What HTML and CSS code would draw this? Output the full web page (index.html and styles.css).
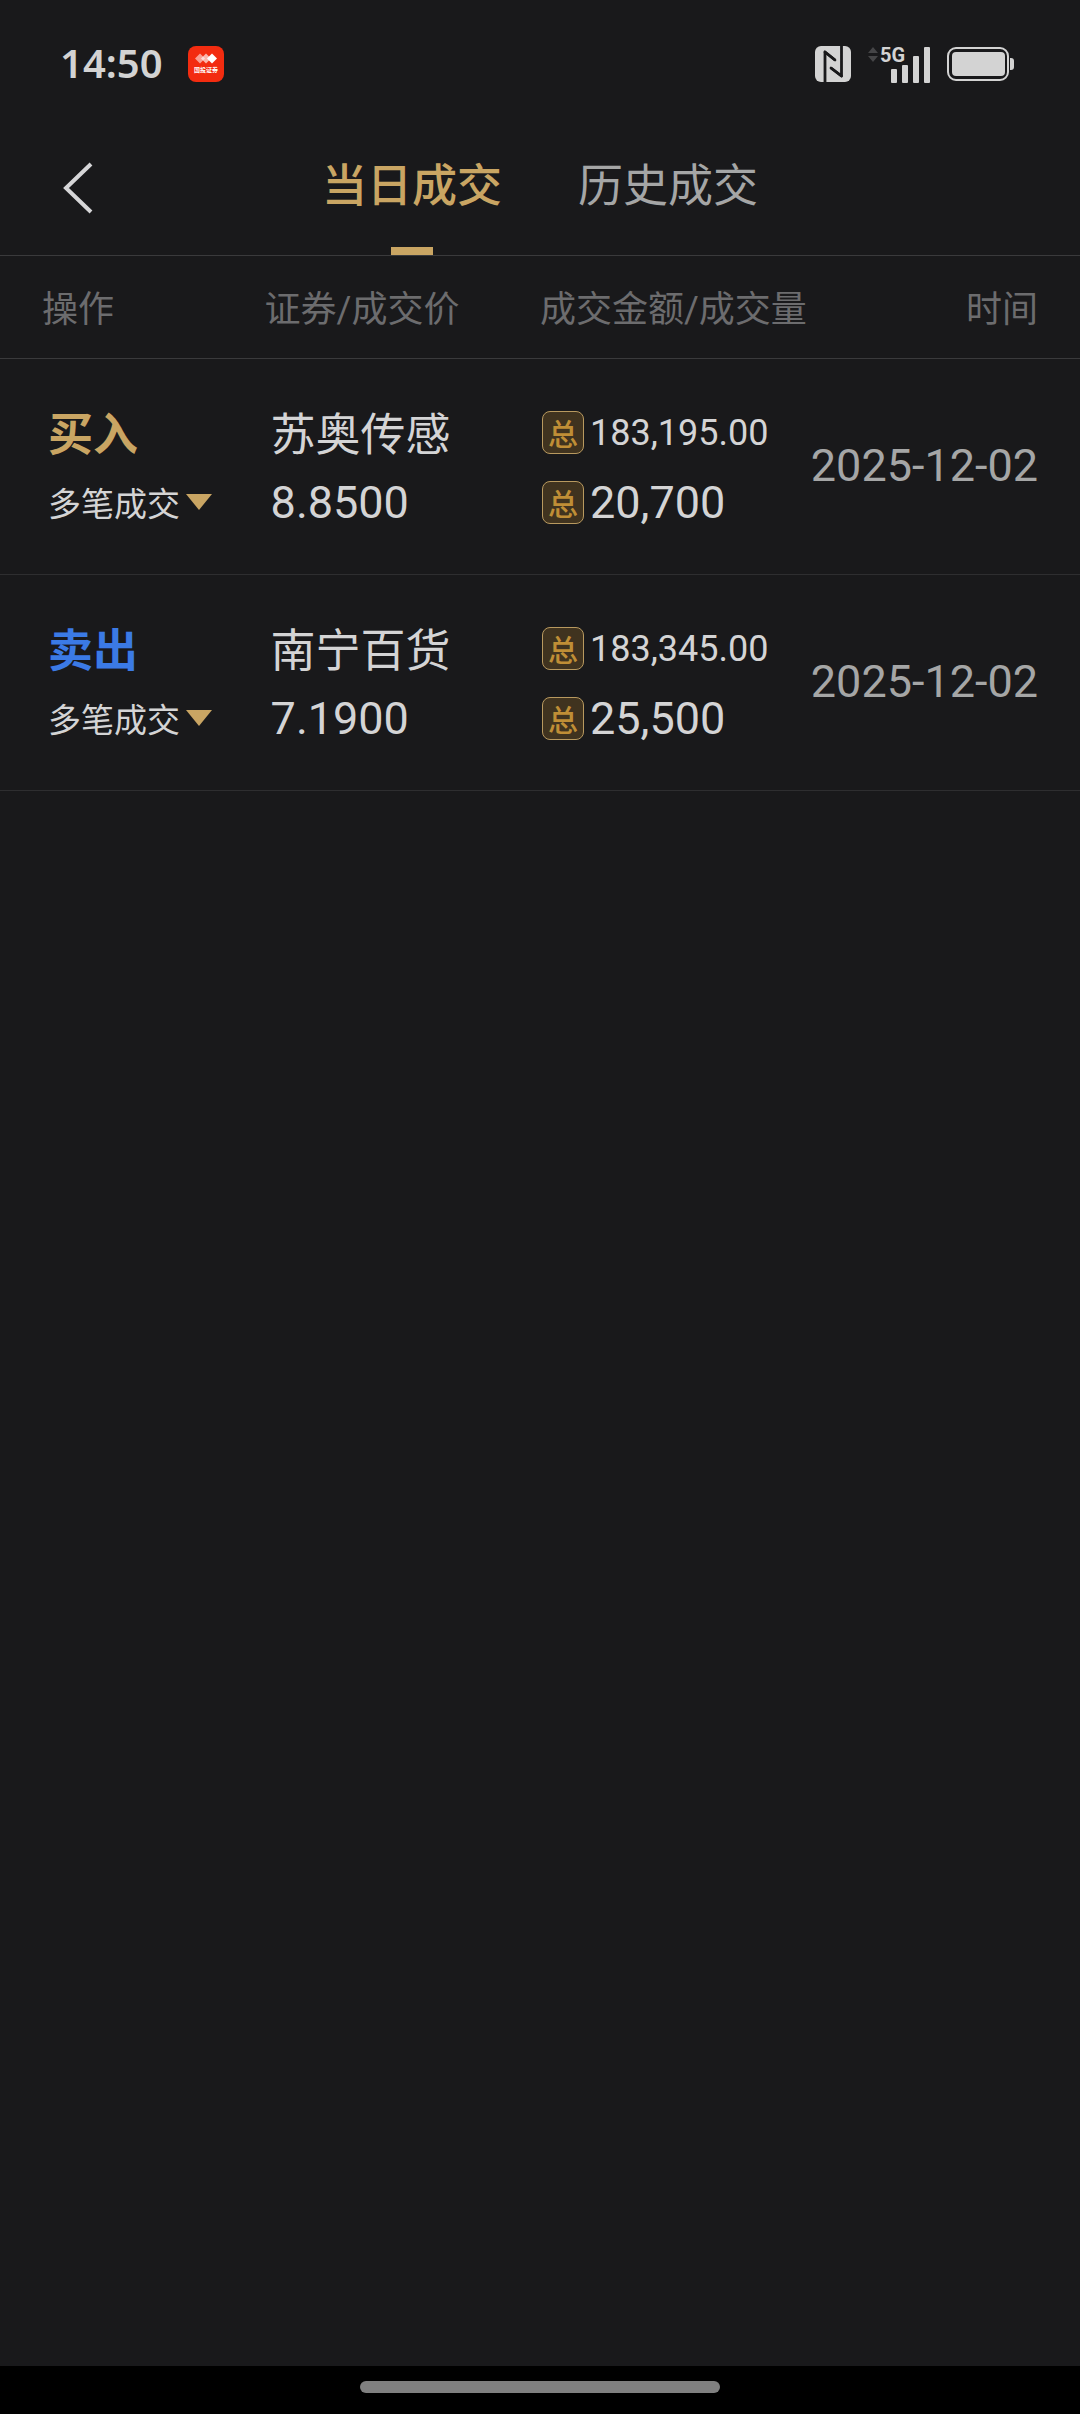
FILE: index.html
```html
<!DOCTYPE html>
<html lang="zh-CN">
<head>
<meta charset="utf-8">
<meta name="viewport" content="width=device-width, initial-scale=1">
<title>当日成交</title>
<link rel="stylesheet" href="styles.css">
</head>
<body>
<div class="status">
  <span class="clock">14:50</span>
  <svg class="app-icon" viewBox="0 0 36 36" role="img" aria-label="国投证券">
    <rect width="36" height="36" rx="8" fill="#f32c10"/>
    <path d="M12 7.500l5 5-5 5-5-5z" fill="#fff" opacity=".55"/>
    <path d="M18 7.500l5 5-5 5-5-5z" fill="#fff" opacity=".65"/>
    <path d="M24 7.500l5 5-5 5-5-5z" fill="#fff"/>
    <text x="18" y="26" text-anchor="middle" class="app-name">国投证券</text>
  </svg>
  <div class="indicators">
    <svg class="nfc" viewBox="0 0 36 36" role="img" aria-label="NFC">
      <rect width="36" height="36" rx="6" fill="#d3d3d3"/>
      <path d="M10 36V6l10 8M26.500 0v30l-10.500-8" fill="none" stroke="#19191b" stroke-width="2.800" stroke-linejoin="round"/>
      <path d="M10 6l10 8M26.500 30l-10.500-8" fill="none" stroke="#19191b" stroke-width="2.800" stroke-linecap="round"/>
    </svg>
    <svg class="signal" viewBox="0 0 62 38" role="img" aria-label="5G">
      <path d="M0 8l5-6 5 6zM0 11h10l-5 6z" fill="#454547"/>
      <text x="12" y="17" class="network">5G</text>
      <g fill="#d3d3d3"><rect x="23" y="24" width="6" height="14" rx="1"/><rect x="34" y="20" width="6" height="18" rx="1"/><rect x="45" y="11" width="6" height="27" rx="1"/><rect x="56" y="2" width="6" height="36" rx="1"/></g>
    </svg>
    <svg class="battery" viewBox="0 0 67 34" role="img" aria-label="电池">
      <rect x="1" y="1" width="60" height="32" rx="8" fill="none" stroke="#d3d3d3" stroke-width="2"/>
      <rect x="5" y="5" width="53" height="24" rx="4" fill="#d3d3d3"/>
      <path d="M63 11h1a3 3 0 0 1 3 3v6a3 3 0 0 1-3 3h-1z" fill="#d3d3d3"/>
    </svg>
  </div>
</div>
<header class="nav">
  <button class="back" type="button" aria-label="返回">
    <svg viewBox="0 0 32 52"><path d="M29 2L4 26l25 24" fill="none" stroke="#d6d6d8" stroke-width="4"/></svg>
  </button>
  <nav class="tabs">
    <a class="tab active" href="#today">当日成交</a>
    <a class="tab" href="#history">历史成交</a>
  </nav>
</header>
<main class="content">
  <table class="deals">
    <thead>
      <tr><th class="col-op">操作</th><th class="col-name">证券/成交价</th><th>成交金额/成交量</th><th class="col-time">时间</th></tr>
    </thead>
    <tbody>
      <tr>
        <td><div class="line cjk side buy">买入</div><button class="line cjk more" type="button">多笔成交<svg class="caret" viewBox="0 0 26 16"><path d="M0 0h26L13 16z" fill="#c9a563"/></svg></button></td>
        <td><div class="line cjk">苏奥传感</div><div class="line">8.8500</div></td>
        <td><div class="line total amount"><span class="badge">总</span>183,195.00</div><div class="line total"><span class="badge">总</span>20,700</div></td>
        <td class="time">2025-12-02</td>
      </tr>
      <tr>
        <td><div class="line cjk side sell">卖出</div><button class="line cjk more" type="button">多笔成交<svg class="caret" viewBox="0 0 26 16"><path d="M0 0h26L13 16z" fill="#c9a563"/></svg></button></td>
        <td><div class="line cjk">南宁百货</div><div class="line">7.1900</div></td>
        <td><div class="line total amount"><span class="badge">总</span>183,345.00</div><div class="line total"><span class="badge">总</span>25,500</div></td>
        <td class="time">2025-12-02</td>
      </tr>
    </tbody>
  </table>
</main>
<footer class="home"><div class="handle"></div></footer>
</body>
</html>
```
FILE: styles.css
```css
* { box-sizing: border-box; }
body {
  margin: 0;
  min-height: 100vh;
  display: flex;
  flex-direction: column;
  background: #19191b;
  color: #d4d4d5;
  font-family: Roboto, "Noto Sans CJK SC", sans-serif;
}
button {
  padding: 0;
  border: 0;
  background: none;
  color: inherit;
  font: inherit;
}
svg { display: block; flex: none; overflow: visible; }

.status {
  display: flex;
  align-items: center;
  height: 128px;
  padding: 0 66px 0 60px;
}
.clock {
  width: 128px;
  padding-bottom: 2px;
  font: 600 40px/56px "Noto Sans", sans-serif;
  color: #d3d3d3;
}
.app-icon { width: 36px; height: 36px; }
.app-name { font: 700 6px "Noto Sans CJK SC", sans-serif; fill: #fff; }
.indicators { display: flex; align-items: center; margin-left: auto; }
.nfc { width: 36px; height: 36px; }
.signal { width: 62px; height: 38px; margin: 0 17px; }
.network { font: 700 20px Roboto, sans-serif; fill: #d3d3d3; }
.battery { width: 67px; height: 34px; }

.nav {
  display: grid;
  grid-template-columns: 1fr auto 1fr;
  height: 128px;
  border-bottom: 1px solid #3a3a3c;
}
.back { justify-self: start; padding: 0 62px 8px; }
.back svg { width: 32px; height: 52px; }
.tabs { display: flex; gap: 76px; }
.tab {
  display: flex;
  flex-direction: column;
  align-items: center;
  justify-content: space-between;
  color: #a5a6a6;
  font-size: 45px;
  line-height: 118px;
  text-decoration: none;
}
.active { color: #c9a563; font-weight: 500; }
.active::after { content: ""; width: 42px; height: 8px; background: #c9a563; }

.content { flex: 1; }
.deals { width: 100%; table-layout: fixed; border-collapse: collapse; }
th {
  height: 102px;
  padding: 0 0 2px;
  border-bottom: 1px solid #3a3a3c;
  color: #6c6c6e;
  font-size: 36px;
  font-weight: 400;
  text-align: left;
  white-space: nowrap;
}
.col-op { width: 24.5%; padding-left: 42px; }
.col-name { width: 25.5%; }
.col-time { padding-right: 42px; text-align: right; }
td {
  padding: 39px 0 36px 6px;
  border-bottom: 1px solid #2e2e30;
  font-size: 45px;
  white-space: nowrap;
}
td:first-child { padding-left: 48px; }
td:nth-child(3) { padding-left: 2px; }
.line { display: flex; align-items: center; height: 70px; }
.cjk { padding-bottom: 2px; }
.side { font-weight: 700; }
.buy { color: #c9a563; }
.sell { color: #3b7ae5; }
.more { gap: 6px; font-size: 33px; }
.caret { width: 26px; height: 16px; }
.total { gap: 6px; }
.amount { font-size: 36px; }
.badge {
  display: flex;
  align-items: center;
  justify-content: center;
  width: 42px;
  height: 43px;
  padding-bottom: 2px;
  border: 1px solid #b8995f;
  border-radius: 8px;
  background: #40331f;
  color: #bf8e36;
  font-size: 30px;
  font-weight: 500;
}
.deals .time { padding: 36px 42px 38px 0; text-align: right; color: #a5a6a6; }

.home {
  display: flex;
  justify-content: center;
  height: 48px;
  padding-top: 15px;
  background: #000;
}
.handle { width: 33.333%; height: 12px; border-radius: 6px; background: #808080; }
```
